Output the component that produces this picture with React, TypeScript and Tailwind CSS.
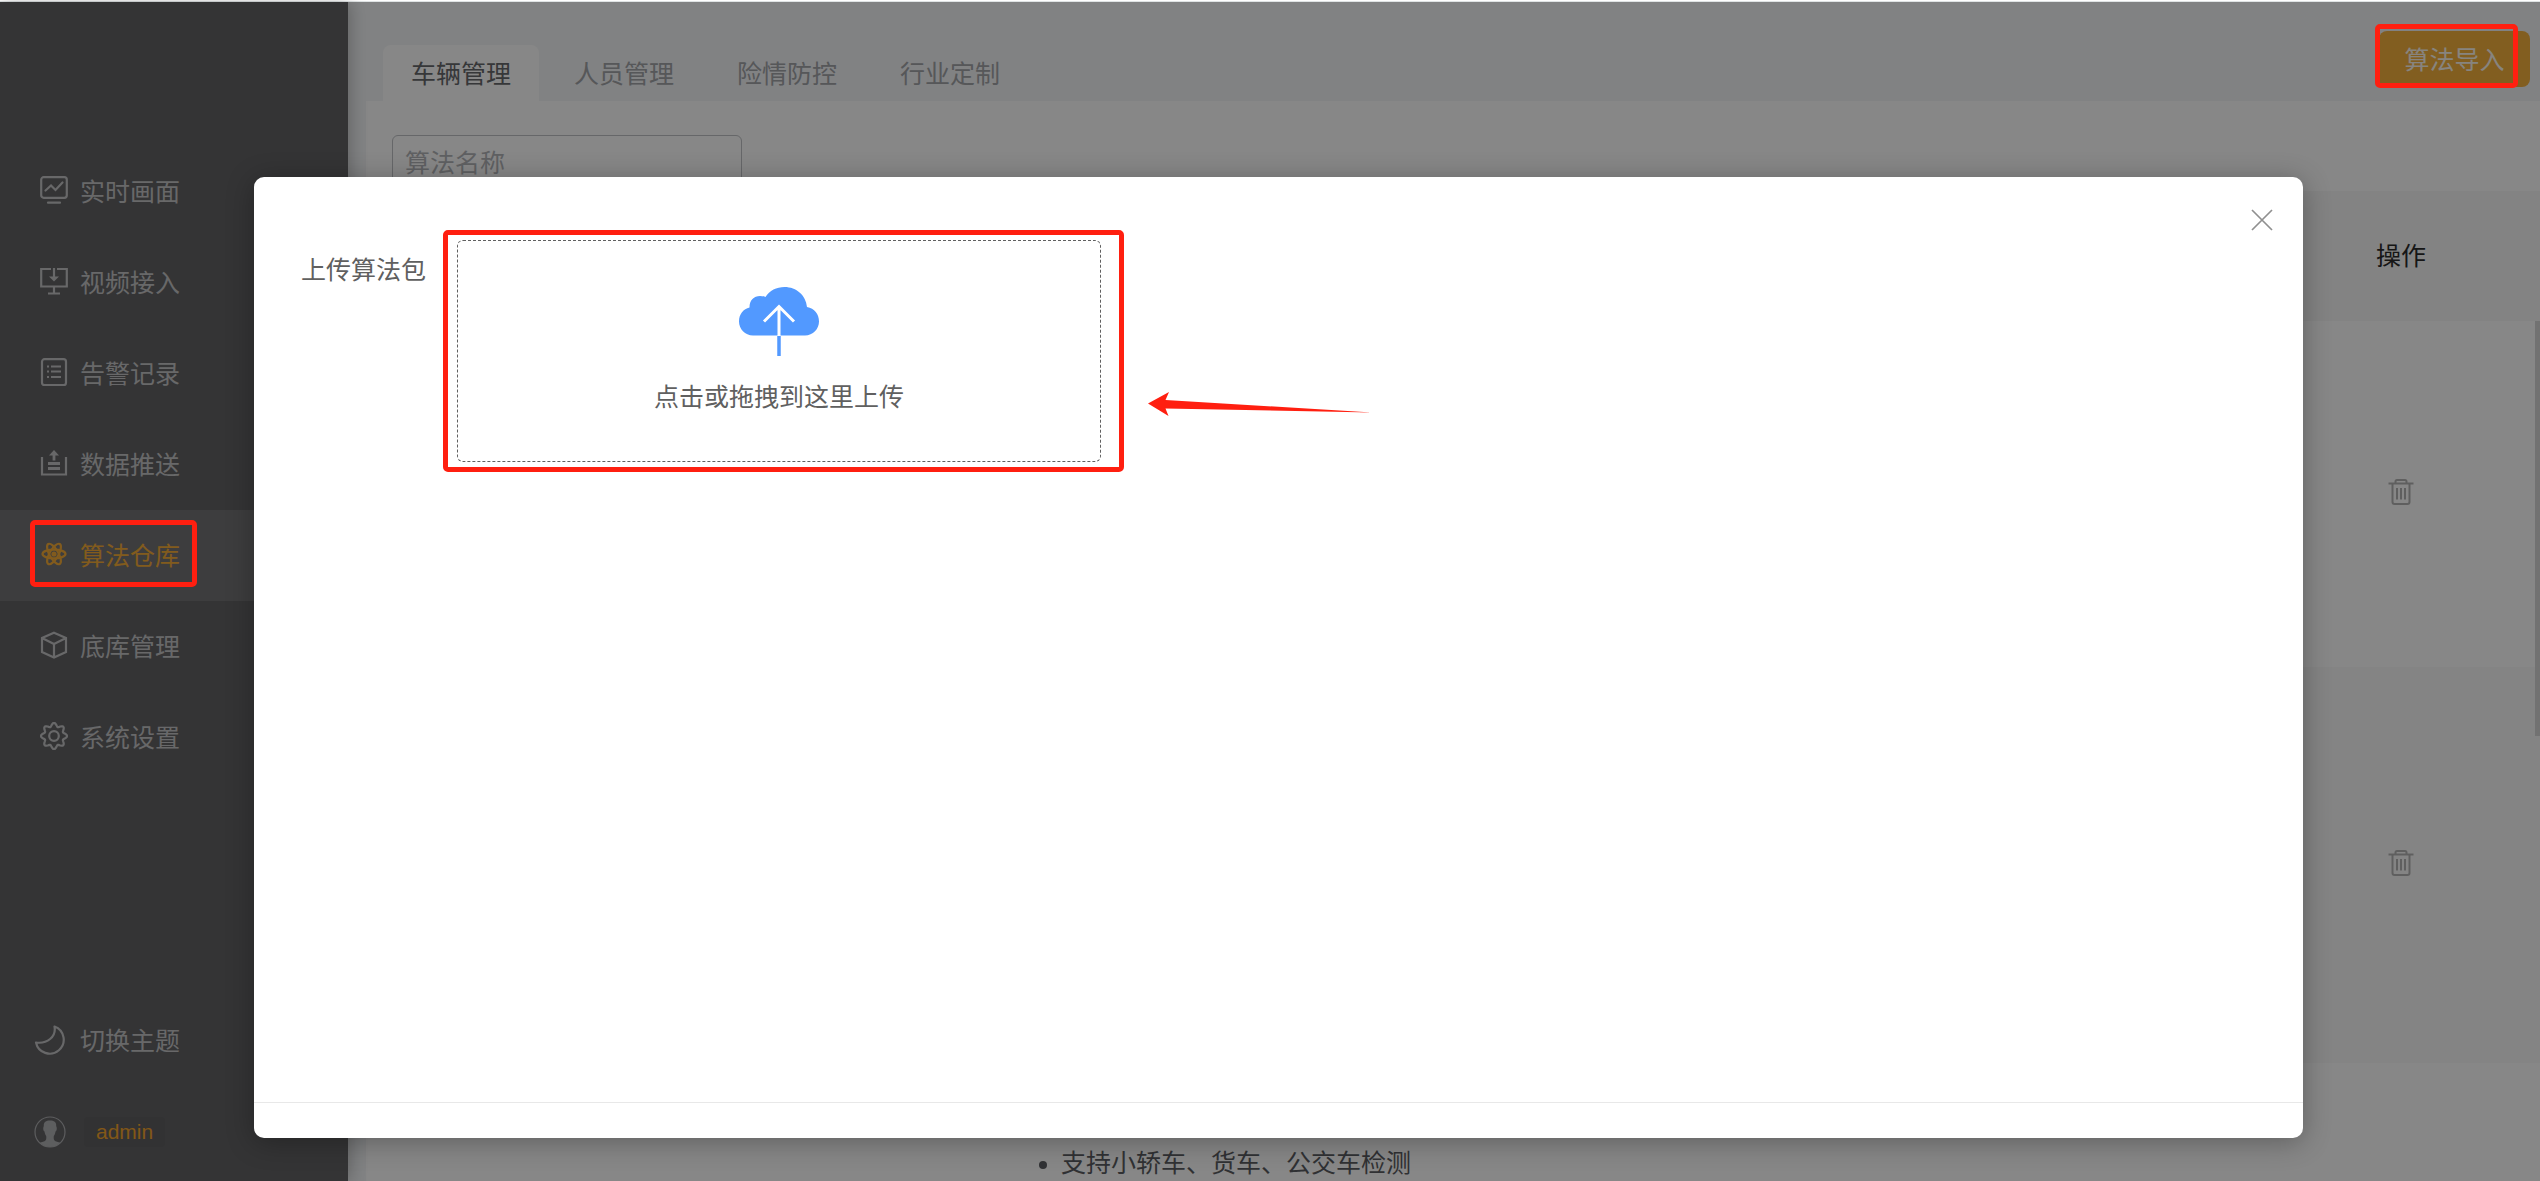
import type { ReactNode } from "react";

function Stroke({ children, className = "size-7", box = 28 }: { children: ReactNode; className?: string; box?: number }) {
  return (
    <svg
      viewBox={`0 0 ${box} ${box}`}
      className={`${className} shrink-0`}
      fill="none"
      stroke="currentColor"
      strokeWidth="2.2"
      aria-hidden="true"
    >
      {children}
    </svg>
  );
}

const ChartIcon = () => (
  <Stroke>
    <rect x="1.2" y="1.2" width="25.6" height="20.6" rx="2.5" />
    <path d="M5.5 14.5 11 9.5l4.5 4.500 7-7.500" strokeLinecap="round" />
    <path d="M8 26.700h12" strokeLinecap="round" />
  </Stroke>
);

const VideoInIcon = () => (
  <Stroke>
    <path d="M11 2H1.200v17.500h25.600V2H17M14 19.500V26M8 26.500h12" />
    <path d="M14 1v10" />
    <path d="m9 9.500 5 5 5-5z" fill="currentColor" stroke="none" />
  </Stroke>
);

const RecordIcon = () => (
  <Stroke>
    <rect x="2" y="1.200" width="24" height="26" rx="2.500" />
    <path d="M7 8.500h2M7 13.500h2M7 19h2M11 8.500h10M11 13.500h10M11 19h10" strokeWidth="2" />
  </Stroke>
);

const PushIcon = () => (
  <Stroke>
    <path d="M2 8v17.500h24V8" />
    <path d="M14 5v6.500M8 14.500h12M8 19.500h12" strokeWidth="2.800" />
    <path d="m9 6.500 5-5.500 5 5.500z" fill="currentColor" stroke="none" />
  </Stroke>
);

const AtomIcon = () => (
  <Stroke>
    <ellipse cx="14" cy="14" rx="11.500" ry="4.400" />
    <ellipse cx="14" cy="14" rx="11.500" ry="4.400" transform="rotate(60 14 14)" />
    <ellipse cx="14" cy="14" rx="11.500" ry="4.400" transform="rotate(120 14 14)" />
    <circle cx="14" cy="14" r="1.500" fill="currentColor" />
  </Stroke>
);

const CubeIcon = () => (
  <Stroke>
    <path d="M14 1.800 26 7v14L14 26.500 2 21V7zM2 7l12 6 12-6M14 13v13" />
  </Stroke>
);

// Eight rounded lobes, sampled from a polar curve.
const gearPath =
  Array.from({ length: 97 }, (_, i) => {
    const a = (i / 96) * Math.PI * 2;
    const r = 11.4 + 1.7 * Math.cos(8 * a);
    return `${i ? "L" : "M"}${(14 + r * Math.cos(a)).toFixed(2)} ${(14 + r * Math.sin(a)).toFixed(2)}`;
  }).join("") + "z";

const GearIcon = () => (
  <Stroke>
    <path d={gearPath} strokeLinejoin="round" />
    <circle cx="14" cy="14" r="4.800" />
  </Stroke>
);

const MoonIcon = () => (
  <Stroke className="size-8" box={32}>
    <path d="M20.500 1.500A14 14 0 1 1 2 17.500C13 19 22.500 12 20.500 1.500z" strokeLinejoin="round" />
  </Stroke>
);

const AvatarIcon = () => (
  <svg viewBox="0 0 32 32" className="size-8 shrink-0" aria-hidden="true">
    <circle cx="16" cy="16" r="15" fill="none" stroke="currentColor" strokeWidth="1.200" />
    <path
      d="M16 4.500c4 0 6.500 1.500 6.200 5.500l.5 1.500c.3 2-.2 3.500-1.200 4-.3 2-1 3.500-1.700 4.500-.4 3 .2 4.500 1.700 5.200l4.800 1.600A15 15 0 0 1 16 31a15 15 0 0 1-10.300-4.200l4.800-1.600c1.500-.7 2.100-2.200 1.700-5.200-.7-1-1.400-2.500-1.700-4.500-1-.5-1.500-2-1.200-4l.5-1.500C9.500 6 12 4.500 16 4.500z"
      fill="currentColor"
    />
  </svg>
);

const TrashIcon = () => (
  <Stroke className="size-7">
    <path
      d="M1.500 5.500h25M8.500 5V3.500q0-1.500 1.500-1.500h8q1.500 0 1.500 1.500V5M5.500 6v18q0 2 2 2h13q2 0 2-2V6M10 10v11.500M14 10v11.500M18 10v11.500"
      strokeWidth="2"
    />
  </Stroke>
);

const menu = [
  { label: "实时画面", icon: <ChartIcon /> },
  { label: "视频接入", icon: <VideoInIcon /> },
  { label: "告警记录", icon: <RecordIcon /> },
  { label: "数据推送", icon: <PushIcon /> },
  { label: "算法仓库", icon: <AtomIcon />, active: true },
  { label: "底库管理", icon: <CubeIcon /> },
  { label: "系统设置", icon: <GearIcon /> },
];

const tabs = ["车辆管理", "人员管理", "险情防控", "行业定制"];

function Highlight({ className }: { className: string }) {
  return <span className={`pointer-events-none absolute z-20 rounded-[5px] border-[5px] border-[#ff1f10] ${className}`} />;
}

function Sidebar() {
  return (
    <aside className="relative flex w-[348px] shrink-0 flex-col bg-[#626265] pt-36 text-[#c4c5c6] shadow-[2px_0_16px_rgba(0,0,0,0.25)]">
      <nav>
        {menu.map((m) => (
          <a
            key={m.label}
            href="#"
            className={`relative flex h-[91px] items-center gap-3 pl-10 ${m.active ? "bg-[#737475] text-[#f5ad38]" : ""}`}
          >
            <span className="pb-1">{m.icon}</span>
            {m.label}
            {m.active && <Highlight className="left-[30px] top-2.5 h-[67px] w-[167px]" />}
          </a>
        ))}
      </nav>
      <div className="mt-auto pb-1">
        <button type="button" className="flex h-[91px] w-full items-center gap-3.5 pl-[34px]">
          <MoonIcon />
          切换主题
        </button>
        <button type="button" className="flex h-[91px] w-full items-center gap-[18px] pl-[34px]">
          <span className="text-[#b0b1b3]">
            <AvatarIcon />
          </span>
          <span className="rounded bg-[#5f5f61] px-3 text-[21px] leading-[30px] text-[#f5a52c]">admin</span>
        </button>
      </div>
    </aside>
  );
}

function DeleteButton() {
  return (
    <button type="button" aria-label="删除" className="mx-auto block pb-1 text-[#b4b4b4]">
      <TrashIcon />
    </button>
  );
}

function AlgorithmTable() {
  return (
    <div className="relative flex-1">
      <table className="w-full table-fixed border-collapse">
        <thead>
          <tr className="h-[130px] bg-[#f7f7f7]">
            <th className="w-[650px]" />
            <th />
            <th className="w-[278px] font-normal text-[#2b2b2b]">操作</th>
          </tr>
        </thead>
        <tbody>
          <tr className="h-[346px]">
            <td />
            <td />
            <td>
              <DeleteButton />
            </td>
          </tr>
          <tr className="h-[396px] bg-[#fafafa]">
            <td />
            <td />
            <td>
              <DeleteButton />
            </td>
          </tr>
          <tr>
            <td />
            <td className="pl-[19px] pt-[82px] text-[#5c5e62]">
              <ul className="list-disc pl-[26px]">
                <li>支持小轿车、货车、公交车检测</li>
              </ul>
            </td>
            <td />
          </tr>
        </tbody>
      </table>
      <span className="absolute right-0 top-[130px] h-[415px] w-[5px] bg-[#d8d8d8]" />
    </div>
  );
}

function UploadDialog() {
  return (
    <div className="absolute inset-0 z-10 flex bg-black/47 pb-[43px] pl-[10%] pr-[237px] pt-[175px]">
      <section
        role="dialog"
        aria-modal="true"
        aria-label="上传算法包"
        className="relative flex flex-1 flex-col rounded-[10px] bg-white text-[#606060] shadow-[0_4px_28px_rgba(0,0,0,0.3)]"
      >
        <button type="button" aria-label="关闭" className="absolute right-[30px] top-8 text-[#909090]">
          <svg viewBox="0 0 22 22" className="size-[22px]" stroke="currentColor" strokeWidth="1.700" aria-hidden="true">
            <path d="M1 1l20 20M21 1L1 21" />
          </svg>
        </button>
        <div className="flex flex-1 items-start pl-[47px] pt-[63px]">
          <label htmlFor="package" className="w-[156px] pt-3">
            上传算法包
          </label>
          <div className="relative">
            <label
              htmlFor="package"
              className="flex h-[222px] w-[644px] cursor-pointer flex-col items-center rounded-md border border-dashed border-[#606060] pt-[46px]"
            >
              <svg viewBox="0 0 80 70" className="h-[70px] w-20" aria-hidden="true">
                <path
                  d="M14 48.500C6 48.500 0 42 0 34.500 0 27 4.500 22 10.500 20.500 10.500 13 15 9 21 9q3 0 5.500 1C30.500 3.500 37.500 0 45.500 0 57.500 0 67 8.500 68 20 75.500 21.500 80 27 80 34.500 80 42 74 48.500 66 48.500z"
                  fill="#5299ff"
                />
                <path d="M40 20v29M25 34.500 40 19.500l15 15" fill="none" stroke="#fff" strokeWidth="3" />
                <path d="M40 49v20" stroke="#5299ff" strokeWidth="3.500" />
              </svg>
              <span className="mt-[22px]">点击或拖拽到这里上传</span>
            </label>
            <input id="package" type="file" className="sr-only" />
            <Highlight className="-bottom-2.5 -left-3.5 -right-[23px] -top-2.5" />
            <svg
              viewBox="0 0 224 26"
              className="absolute left-[691px] top-[151px] h-[26px] w-56"
              fill="#ff1f10"
              aria-hidden="true"
            >
              <path d="M0 12.500 21 1l-3.500 8L224 21.500 17.500 17.500 20.500 25z" />
            </svg>
          </div>
        </div>
        <footer className="h-9 border-t border-[#e8e8e8]" />
      </section>
    </div>
  );
}

export default function App() {
  return (
    <div className="flex h-screen flex-col overflow-hidden bg-white font-['Liberation_Sans','Noto_Sans_CJK_SC',sans-serif] text-[25px] leading-9">
      <div className="h-0.5 shrink-0 border-b border-[#dfe3e4] bg-white" />
      <div className="relative flex min-h-0 flex-1">
        <Sidebar />
        <main className="flex min-w-0 flex-1 flex-col overflow-hidden bg-[#f4f6f8] pl-[18px]">
          <header className="flex h-[100px] items-end justify-between pl-[17px]">
            <div role="tablist" className="flex gap-[7px]">
              {tabs.map((t, i) => (
                <button
                  key={t}
                  type="button"
                  role="tab"
                  aria-selected={i === 0}
                  className={`h-14 w-[156px] rounded-t-lg pt-0.5 ${i === 0 ? "bg-white text-[#66686c]" : "text-[#a2a4a8]"}`}
                >
                  {t}
                </button>
              ))}
            </div>
            <div className="relative mb-3.5 mr-2.5">
              <button type="button" className="block h-14 w-[151px] rounded-lg bg-[#f5b13e] pt-0.5 text-[#fffaf0]">
                算法导入
              </button>
              <Highlight className="-left-1 -top-[7px] h-16 w-[143px]" />
            </div>
          </header>
          <div className="flex flex-1 flex-col bg-white">
            <div className="flex h-[90px] items-end pb-0.5 pl-[26px]">
              <input
                type="text"
                aria-label="算法名称"
                placeholder="算法名称"
                className="h-[54px] w-[350px] rounded-md border border-[#c0c2c6] px-3 pt-0.5 placeholder:text-[#b4b6ba]"
              />
            </div>
            <AlgorithmTable />
          </div>
        </main>
        <UploadDialog />
      </div>
    </div>
  );
}
